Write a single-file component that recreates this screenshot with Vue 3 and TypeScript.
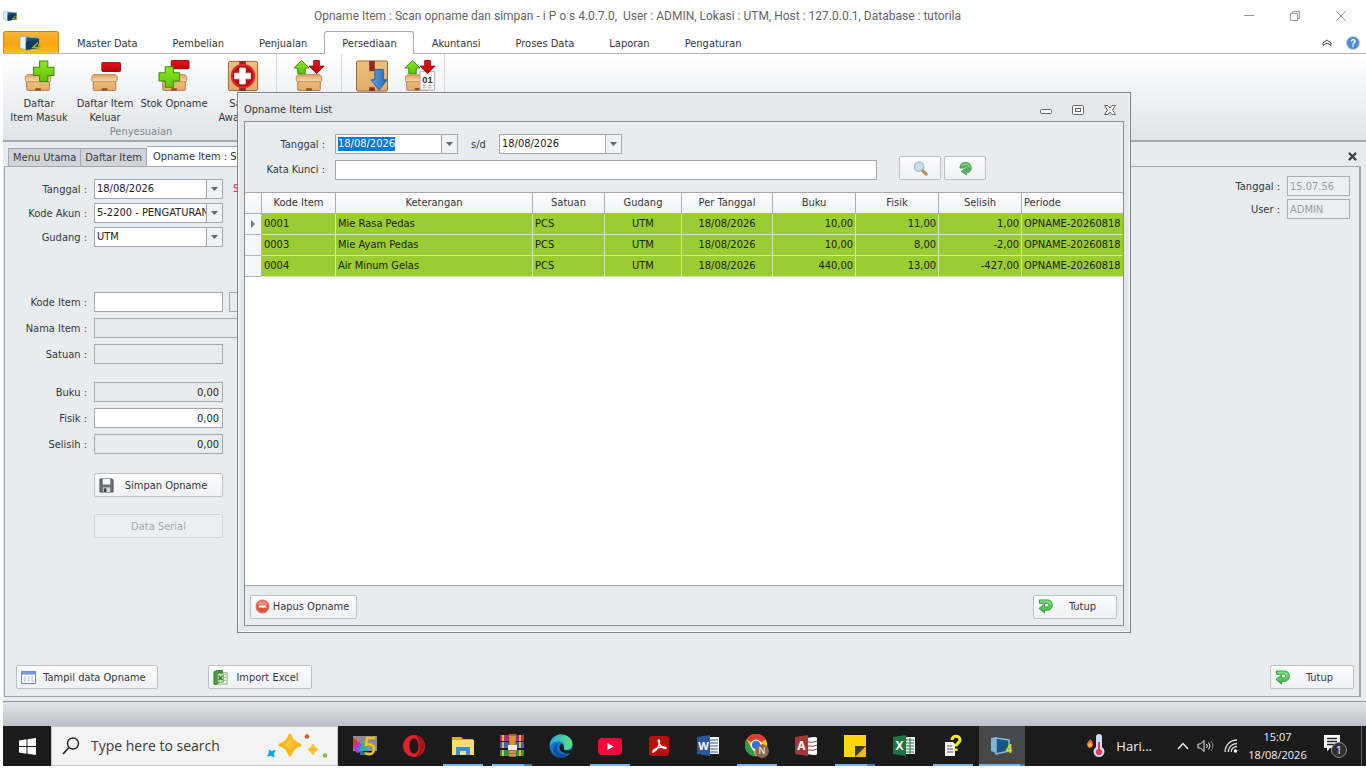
<script setup lang="ts">
import { onMounted, ref } from 'vue'

interface StockRow {
  kode: string
  nama: string
  satuan: string
  gudang: string
  tanggal: string
  buku: string
  fisik: string
  selisih: string
  periode: string
}

interface TaskApp {
  id: string
  label: string
  open?: boolean
  active?: boolean
  stacked?: boolean
}

const menu = ['Master Data', 'Pembelian', 'Penjualan', 'Persediaan', 'Akuntansi', 'Proses Data', 'Laporan', 'Pengaturan']
const activeMenu = ref('Persediaan')

const tools = [
  { icon: 'box-plus', lines: ['Daftar', 'Item Masuk'] },
  { icon: 'box-minus', lines: ['Daftar Item', 'Keluar'] },
  { icon: 'box-both', lines: ['Stok Opname'] },
  { icon: 'box-aid', lines: ['Saldo', 'Awal Item'] },
]

const rows: StockRow[] = [
  { kode: '0001', nama: 'Mie Rasa Pedas', satuan: 'PCS', gudang: 'UTM', tanggal: '18/08/2026', buku: '10,00', fisik: '11,00', selisih: '1,00', periode: 'OPNAME-20260818' },
  { kode: '0003', nama: 'Mie Ayam Pedas', satuan: 'PCS', gudang: 'UTM', tanggal: '18/08/2026', buku: '10,00', fisik: '8,00', selisih: '-2,00', periode: 'OPNAME-20260818' },
  { kode: '0004', nama: 'Air Minum Gelas', satuan: 'PCS', gudang: 'UTM', tanggal: '18/08/2026', buku: '440,00', fisik: '13,00', selisih: '-427,00', periode: 'OPNAME-20260818' },
]

const apps: TaskApp[] = [
  { id: 'five', label: 'i P o s 5' },
  { id: 'opera', label: 'Opera' },
  { id: 'folder', label: 'File Explorer', open: true },
  { id: 'rar', label: 'WinRAR', open: true, stacked: true },
  { id: 'edge', label: 'Microsoft Edge' },
  { id: 'youtube', label: 'YouTube', open: true },
  { id: 'pdf', label: 'Acrobat' },
  { id: 'word', label: 'Word' },
  { id: 'chrome', label: 'Chrome', open: true },
  { id: 'access', label: 'Access' },
  { id: 'sticky', label: 'Sticky Notes', open: true, stacked: true },
  { id: 'excel', label: 'Excel' },
  { id: 'help', label: 'Help', open: true },
  { id: 'ipos', label: 'i P o s 4', open: true, active: true, stacked: true },
]

const dateFrom = ref('18/08/2026')
const dateTo = ref('18/08/2026')
const keyword = ref('')
const dateFromBox = ref<HTMLInputElement | null>(null)

onMounted(() => {
  dateFromBox.value?.focus()
  dateFromBox.value?.select()
})
</script>

<template>
  <svg class="defs" aria-hidden="true">
    <defs>
      <linearGradient id="g-box" x1="0" y1="0" x2="0" y2="1">
        <stop offset="0" stop-color="#eebf80" /><stop offset="1" stop-color="#e0ac6c" />
      </linearGradient>
      <linearGradient id="g-flap" x1="0" y1="0" x2="0" y2="1">
        <stop offset="0" stop-color="#dca465" /><stop offset="1" stop-color="#fbdcab" />
      </linearGradient>
      <linearGradient id="g-green" x1="0" y1="0" x2="0" y2="1">
        <stop offset="0" stop-color="#8ee51c" /><stop offset="1" stop-color="#62c40e" />
      </linearGradient>
      <linearGradient id="g-red" x1="0" y1="0" x2="0" y2="1">
        <stop offset="0" stop-color="#e80f1c" /><stop offset="1" stop-color="#b8050c" />
      </linearGradient>
      <linearGradient id="g-blue" x1="0" y1="0" x2="1" y2="0">
        <stop offset="0" stop-color="#5ba3e6" /><stop offset="1" stop-color="#2a66b0" />
      </linearGradient>
      <linearGradient id="g-back" x1="0" y1="0" x2="0" y2="1">
        <stop offset="0" stop-color="#86e487" /><stop offset="1" stop-color="#3fb347" />
      </linearGradient>
      <linearGradient id="g-star" x1="0" y1="0" x2="1" y2="1">
        <stop offset="0" stop-color="#ffdf5a" /><stop offset="1" stop-color="#f0a512" />
      </linearGradient>
      <linearGradient id="g-edge" x1="0" y1="0" x2="1" y2="0">
        <stop offset="0" stop-color="#28a8e0" /><stop offset="1" stop-color="#5fe07c" />
      </linearGradient>
    </defs>

    <symbol id="box" viewBox="0 0 30 18">
      <path d="M3 6h24v10.500a1 1 0 0 1-1 1H4a1 1 0 0 1-1-1z" fill="url(#g-box)" stroke="#b07a42" />
      <path d="M3.500.5h23l2 2v4c0 1-.5 1.500-1.500 1.500H3C2 8 1.500 7.500 1.500 6.500v-4z" fill="url(#g-flap)" stroke="#c08b52" />
      <path d="M12 15h6v2.500h-6z" fill="#9a4a26" />
    </symbol>
    <symbol id="plus" viewBox="0 0 22 22">
      <path d="M7 1h8v6h6v8h-6v6H7v-6H1V7h6z" fill="url(#g-green)" stroke="#3b8f0d" stroke-linejoin="round" />
    </symbol>
    <symbol id="minus" viewBox="0 0 20 10">
      <rect x="0.5" y="0.5" width="19" height="9" rx="1" fill="url(#g-red)" stroke="#9e0a10" />
    </symbol>
    <symbol id="box-plus" viewBox="0 0 34 34">
      <use href="#box" x="1" y="15" width="30" height="18" /><use href="#plus" x="10" y="0" width="24" height="24" />
    </symbol>
    <symbol id="box-minus" viewBox="0 0 34 34">
      <use href="#box" x="1" y="15" width="31" height="18" /><use href="#minus" x="13" y="2" width="21" height="11" />
    </symbol>
    <symbol id="box-both" viewBox="0 0 34 34">
      <use href="#box" x="2" y="15" width="30" height="18" /><use href="#minus" x="13" y="0" width="21" height="10" /><use href="#plus" x="0" y="6" width="24" height="24" />
    </symbol>
    <symbol id="box-aid" viewBox="0 0 34 34">
      <rect x="1.500" y="1.500" width="31" height="31" rx="2" fill="url(#g-box)" stroke="#9a5f2a" />
      <path d="M13 1h7v6h-7zM13 29h7v4h-7z" fill="#8e2c1c" />
      <circle cx="17" cy="17" r="12" fill="#b80d15" stroke="#dc2a2a" stroke-width="2" />
      <path d="M13.500 8.500h6v5.500H25v6h-5.500v5.500h-6V20H8v-6h5.500z" fill="#fff" stroke="#ddd" />
    </symbol>
    <symbol id="box-swap" viewBox="0 0 34 34">
      <use href="#box" x="1" y="15" width="32" height="18" />
      <path d="M9 .5l8 8h-4v6H5v-6H1z" fill="url(#g-green)" stroke="#3b8f0d" />
      <path d="M22 .5h6v6h5l-8 8-8-8h5z" fill="url(#g-red)" stroke="#9e0a10" />
    </symbol>
    <symbol id="box-down" viewBox="0 0 34 34">
      <rect x=".5" y="1" width="33" height="32" rx="2" fill="url(#g-box)" stroke="#9a5f2a" />
      <path d="M14 1h6v11h-6zM14 29h6v4h-6z" fill="#8e2c1c" />
      <path d="M20 10h9v11h4l-8.500 11L16 21h4z" fill="url(#g-blue)" stroke="#2a5d9c" />
    </symbol>
    <symbol id="box-date" viewBox="0 0 34 34">
      <use href="#box" x="0" y="15" width="29" height="18" />
      <path d="M17 12h15.500v20H17z" fill="#fafafa" stroke="#aaa" />
      <path d="M9 .5l8 8h-4v6H5v-6H1z" fill="url(#g-green)" stroke="#3b8f0d" />
      <path d="M22 .5h6v6h5l-8 8-8-8h5z" fill="url(#g-red)" stroke="#9e0a10" />
      <path d="M20 26h3v2h-3zM26 26h3v2h-3zM20 29h3v1h-3zM26 29h3v1h-3z" fill="#aaa" />
    </symbol>
    <symbol id="pc" viewBox="0 0 24 16">
      <path d="M1 2l6-1v14l-6-2z" fill="#e9f2f7" stroke="#9bb9c9" />
      <path d="M7 2l13 1v10L7 15z" fill="#1c4f79" stroke="#7fa9c4" />
      <path d="M7 7l13-3v9L7 15z" fill="#123a5c" />
      <path d="M19 7.500l-5 5h8M20 9v5" fill="none" stroke="#a6b81c" stroke-width="1.500" />
    </symbol>
    <symbol id="back" viewBox="0 0 16 16">
      <path d="M1.500 1H10c7 0 7 11 0 11H7v3L1 10l6-4.500V8.500h2.500c2.500 0 2.500-4 0-4H1.500z" fill="url(#g-back)" stroke="#2a9a36" stroke-linejoin="round" />
    </symbol>
    <symbol id="redo" viewBox="0 0 16 16">
      <path d="M2.500 5C4 1.500 6 1.500 8 1.500c8 0 8 11 1 11V15l-5.500-4L9 7.500v2c2-.5 2-3-.5-3-1 0-1.500 0-2 1H2z" fill="#5fb168" stroke="#43974f" stroke-linejoin="round" />
      <path d="M4.500 4.500c3-2 7-1.500 7.500 2" fill="none" stroke="#a8dfaa" />
    </symbol>
  </svg>

  <div class="screen">
    <header class="titlebar">
      <svg class="app-mark" viewBox="0 0 24 16" aria-hidden="true"><use href="#pc" /></svg>
      <h1>Opname Item : Scan opname dan simpan - i P o s 4.0.7.0,&nbsp; User : ADMIN, Lokasi : UTM, Host : 127.0.0.1, Database : tutorila</h1>
      <div class="win-controls">
        <button aria-label="Minimize"><svg viewBox="0 0 12 12"><path d="M1 5.500h10" /></svg></button>
        <button aria-label="Restore"><svg viewBox="0 0 12 12"><path d="M1.500 3.500h7v7h-7zM3.500 3.500v-2h7v7h-2" /></svg></button>
        <button aria-label="Close"><svg viewBox="0 0 12 12"><path d="M1 1l10 10M11 1L1 11" /></svg></button>
      </div>
    </header>

    <nav class="menu">
      <button class="app-button" aria-label="Menu aplikasi"><svg viewBox="0 0 24 16"><use href="#pc" /></svg></button>
      <button
        v-for="m in menu"
        :key="m"
        class="menu-tab"
        :class="{ active: m === activeMenu }"
        @click="activeMenu = m"
      >{{ m }}</button>
      <div class="menu-end">
        <button aria-label="Ciutkan"><svg class="chev" viewBox="0 0 10 8"><path d="M1 4l4-3 4 3v2.500L5 4 1 6.500z" fill="#fff" stroke="#555" /></svg></button>
        <button aria-label="Bantuan">
          <svg class="help" viewBox="0 0 14 14"><circle cx="7" cy="7" r="6.500" fill="#4c8ad0" stroke="#b9d0ea" /><text x="7" y="11" text-anchor="middle" font-size="10" font-weight="700" font-family="Liberation Sans, sans-serif" fill="#fff">?</text></svg>
        </button>
      </div>
    </nav>

    <section class="ribbon">
      <div class="group adjust">
        <div class="tools">
          <button v-for="t in tools" :key="t.icon" class="tool">
            <svg viewBox="0 0 34 34"><use :href="'#' + t.icon" /></svg>
            <span v-for="l in t.lines" :key="l">{{ l }}</span>
          </button>
        </div>
        <div class="group-name">Penyesuaian</div>
      </div>
      <div class="group single"><button class="tool" aria-label="Transfer item"><svg viewBox="0 0 34 34"><use href="#box-swap" /></svg></button></div>
      <div class="group pair">
        <button class="tool" aria-label="Terima item"><svg viewBox="0 0 34 34"><use href="#box-down" /></svg></button>
        <button class="tool" aria-label="Periode item">
          <svg viewBox="0 0 34 34">
            <use href="#box-date" />
            <text x="25" y="24" text-anchor="middle" font-size="10" font-weight="700" font-family="Liberation Sans, sans-serif" fill="#333">01</text>
          </svg>
        </button>
      </div>
    </section>

    <main class="workspace">
      <div class="doc-tabs">
        <button class="doc-tab">Menu Utama</button>
        <button class="doc-tab">Daftar Item</button>
        <button class="doc-tab active">Opname Item : Scan opname</button>
        <button class="doc-close" aria-label="Tutup tab"><svg viewBox="0 0 10 10"><path d="M1 1l8 8M9 1L1 9" stroke="#444" stroke-width="2.500" /></svg></button>
      </div>

      <div class="panel">
        <form class="form" @submit.prevent>
          <div class="block tight">
            <div class="row">
              <label for="f-tgl">Tanggal :</label>
              <div class="combo"><input id="f-tgl" type="text" value="18/08/2026" /><button type="button" class="drop" aria-label="Pilih tanggal"><svg viewBox="0 0 7 4"><path d="M0 0h7L3.500 4z" /></svg></button></div>
              <span class="note">Scan</span>
            </div>
            <div class="row">
              <label for="f-akun">Kode Akun :</label>
              <div class="combo"><select id="f-akun"><option>5-2200 - PENGATURAN STOK</option></select><span class="drop"><svg viewBox="0 0 7 4"><path d="M0 0h7L3.500 4z" /></svg></span></div>
            </div>
            <div class="row">
              <label for="f-gudang">Gudang :</label>
              <div class="combo"><select id="f-gudang"><option>UTM</option></select><span class="drop"><svg viewBox="0 0 7 4"><path d="M0 0h7L3.500 4z" /></svg></span></div>
            </div>
          </div>
          <div class="block item">
            <div class="row"><label for="f-kode">Kode Item :</label><input id="f-kode" class="box" type="text" /><button type="button" class="find" aria-label="Cari item"></button></div>
            <div class="row"><label for="f-nama">Nama Item :</label><input id="f-nama" class="box wide" type="text" readonly /></div>
            <div class="row"><label for="f-satuan">Satuan :</label><input id="f-satuan" class="box" type="text" readonly /></div>
          </div>
          <div class="block qty">
            <div class="row"><label for="f-buku">Buku :</label><input id="f-buku" class="box num" type="text" value="0,00" readonly /></div>
            <div class="row"><label for="f-fisik">Fisik :</label><input id="f-fisik" class="box num" type="text" value="0,00" /></div>
            <div class="row"><label for="f-selisih">Selisih :</label><input id="f-selisih" class="box num" type="text" value="0,00" readonly /></div>
          </div>
          <div class="actions">
            <button type="submit" class="btn">
              <svg class="ic" viewBox="0 0 16 16"><path d="M1 1h13l1 1v13H1z" fill="#6b7075" stroke="#4c5054" /><path d="M4 1h8v6H4z" fill="#f4f6f8" /><path d="M4 10h8v5H4z" fill="#d5d9dd" /><path d="M5 11h3v4H5z" fill="#3f4347" /></svg>
              <span>Simpan Opname</span>
            </button>
            <button type="button" class="btn" disabled><span>Data Serial</span></button>
          </div>
        </form>

        <div class="info">
          <div class="row"><label for="i-jam">Tanggal :</label><input id="i-jam" type="text" value="15.07.56" disabled /></div>
          <div class="row"><label for="i-user">User :</label><input id="i-user" type="text" value="ADMIN" disabled /></div>
        </div>

        <div class="panel-foot">
          <button class="btn show">
            <svg class="ic" viewBox="0 0 16 16"><path d="M.5 1.500h15v13H.5z" fill="#fff" stroke="#5b7cc0" /><path d="M1 2h14v3H1z" fill="#7b9de0" /><path d="M3 7.500h2M7 7.500h2M11 7.500h2M3 9.500h2M7 9.500h2M11 9.500h2M3 11.500h2M7 11.500h2M11 11.500h2" stroke="#8fa5c8" /></svg>
            <span>Tampil data Opname</span>
          </button>
          <button class="btn import">
            <svg class="ic" viewBox="0 0 16 16"><path d="M6 3h9v12H6z" fill="#f3faf1" stroke="#77b068" /><path d="M12 5h2M12 8h2M12 11h2" stroke="#77b068" /><path d="M1 2l3-1.500h6V3H5v10l-1 3-3-1z" fill="#4c9c3d" stroke="#2f7c27" /><path d="M5 4h6v9H5z" fill="#dff0d8" stroke="#5ba34b" /><path d="M6 6l4 5M10 6l-4 5" stroke="#2c6d25" stroke-width="1.500" /></svg>
            <span>Import Excel</span>
          </button>
          <button class="btn close"><svg class="ic" viewBox="0 0 16 16"><use href="#back" /></svg><span>Tutup</span></button>
        </div>
      </div>
    </main>

    <div class="statusbar"></div>

    <footer class="taskbar">
      <button class="start" aria-label="Start"><svg viewBox="0 0 17 17"><path d="M0 2.500L7.500 1.300V8H0zM8.500 1.200L17 0v8H8.500zM0 9h7.500v6.700L0 14.500zM8.500 9H17v8l-8.500-1.200z" fill="#fff" /></svg></button>
      <label class="search">
        <svg class="lens" viewBox="0 0 18 18"><circle cx="11" cy="6.500" r="5.500" fill="none" stroke="#222" stroke-width="1.400" /><path d="M7 10.500L1 17" stroke="#222" stroke-width="1.600" /></svg>
        <input type="text" placeholder="Type here to search" aria-label="Type here to search" />
        <svg class="spark" viewBox="0 0 62 26">
          <path d="M24 2q2 7.500 10 10-8 2.500-10 10-2-7.500-10-10 8-2.500 10-10z" fill="url(#g-star)" stroke="#f5b91e" stroke-width="3" stroke-linejoin="round" />
          <path d="M47 11q1 4 5 5.500-4 1.500-5 5.500-1-4-5-5.500 4-1.500 5-5.500z" fill="#fbc02d" stroke="#fbc02d" stroke-linejoin="round" />
          <path d="M3.500 17l2 1.500L9 17.500 7.500 20.500 8 24 5 22.500 1.500 23l1.500-2.500z" fill="#16a3e0" stroke="#16a3e0" stroke-linejoin="round" />
          <circle cx="41" cy="3.500" r="2.200" fill="#e85426" /><circle cx="59" cy="22.500" r="2.200" fill="#83bd49" />
        </svg>
      </label>

      <div class="apps">
        <button v-for="a in apps" :key="a.id" class="app" :class="{ open: a.open, active: a.active, stacked: a.stacked }" :aria-label="a.label">
          <svg v-if="a.id === 'five'" viewBox="0 0 24 24"><path d="M0 2h24v15H0z" fill="#8b8d90" /><path d="M0 3l10 10H0z" fill="#e2341d" /><path d="M0 14l6-7 6 10-8 2z" fill="#a43be0" /><path d="M10 8l5 9H5z" fill="#19b8b0" /><path d="M7 18h10v3H7z" fill="#3d6c93" /><path d="M22 4h-8l-1 7c4-2 9 0 8 5s-6 5-9 3" fill="none" stroke="#f2c313" stroke-width="2.400" /></svg>
          <svg v-else-if="a.id === 'opera'" viewBox="0 0 24 24"><path fill-rule="evenodd" d="M12 1a11 11 0 1 0 .01 0zM12 4.500c3 0 4.500 3.500 4.500 7.500s-1.500 7.500-4.500 7.500S7.500 16 7.500 12 9 4.500 12 4.500z" fill="#e0202c" /><path d="M14 1.500C25 4 25 20 14 22.500 19 18 19 6 14 1.500z" fill="#a70f1b" /></svg>
          <svg v-else-if="a.id === 'folder'" viewBox="0 0 24 24"><path d="M1 3h9l2 2h10v16H1z" fill="#e5a924" /><path d="M1 6h22v15H1z" fill="#fddc78" /><path d="M5 21v-8h14v8h-4v-4H9v4z" fill="#3b8fd0" /></svg>
          <svg v-else-if="a.id === 'rar'" viewBox="0 0 24 24"><path d="M0 1h24v6H0z" fill="#b02a78" /><path d="M0 8h24v6H0z" fill="#3f5fb8" /><path d="M0 16h24v6H0z" fill="#3c8f3a" /><path d="M2 1h2v6H2zM2 8h2v6H2zM2 16h2v6H2zM19 1h2v6h-2zM19 8h2v6h-2zM19 16h2v6h-2z" fill="#e8b93a" /><path d="M9 0h7v23H9z" fill="#b5652a" /><path d="M9 3h7M9 6h7M9 18h7M9 21h7" stroke="#e9c38a" /><path d="M8 11h9v5H8z" fill="#f3efe0" /><path d="M10 3h5v8h-5z" fill="#d7942d" /></svg>
          <svg v-else-if="a.id === 'edge'" viewBox="0 0 24 24"><circle cx="12" cy="12" r="11.500" fill="#1377c9" /><path d="M1 10C2 3 8 .5 12 .5c7 0 12 5 11.500 10C23 15 17 17 14.500 15c1-1.500 1.500-7-4-7.500C6 7 2 9 1 13z" fill="url(#g-edge)" /><path d="M9 10c-4 5 1 12 10 10-4 5-12 4-14-1S6 10 9 10z" fill="#0c4f9e" /><path d="M14.500 15c2 2 6 2 8.500 0l-1.500 4c-7 2-11-2-11-6 0-2 1-3 2.500-3 2 1 2 3.500 1.500 5z" fill="#181818" /></svg>
          <svg v-else-if="a.id === 'youtube'" viewBox="0 0 24 24"><rect y="4" width="24" height="17" rx="4" fill="#f8043a" /><path d="M9.500 9v7l6-3.500z" fill="#fff" /></svg>
          <svg v-else-if="a.id === 'pdf'" viewBox="0 0 24 24"><rect x="2" y="2" width="20" height="20" rx="3" fill="#b70f0c" /><path d="M6 18c3-1 7-6 6.500-11-.5-2-1.800-1-1 1 1 3 4 6 7 6.500 1.500-.5 0-2-3-1.500-4 .5-8 2-9.500 4z" fill="none" stroke="#fff" stroke-width="1.500" /></svg>
          <svg v-else-if="a.id === 'word'" viewBox="0 0 24 24"><path d="M12 3h11v17H12z" fill="#fff" /><path d="M14 6h8M14 9h8M14 12h8M14 15h8M14 18h8" stroke="#2b579a" /><path d="M1 3l13-2v21L1 20z" fill="#2b579a" /><text x="7.500" y="16" text-anchor="middle" font-size="11" font-weight="700" font-family="Open Sans, sans-serif" fill="#fff">W</text></svg>
          <svg v-else-if="a.id === 'chrome'" viewBox="0 0 26 26"><circle cx="12" cy="12" r="12" fill="#f9c21b" /><path d="M12 12L1.600 6A12 12 0 0 1 22.400 6z" fill="#df3b2f" /><path d="M12 0a12 12 0 0 1 10.400 6H12z" fill="#df3b2f" /><path d="M1.600 6L7 15l5 9A12 12 0 0 1 1.600 6z" fill="#2c9b4b" /><circle cx="12" cy="12" r="6" fill="#fff" /><circle cx="12" cy="12" r="4.600" fill="#2f72e0" /><circle cx="18.500" cy="18.500" r="7.500" fill="#84665c" /><text x="18.500" y="22" text-anchor="middle" font-size="10" font-family="Open Sans, sans-serif" fill="#fff">N</text></svg>
          <svg v-else-if="a.id === 'access'" viewBox="0 0 24 24"><path d="M13 4q10-2 10 0v16q0 2-10 0z" fill="#fff" /><path d="M13 8q7 1 10-1M13 12q7 1 10-1M13 16q7 1 10-1" stroke="#a4373a" fill="none" /><path d="M1 3l13-2v21L1 20z" fill="#a4373a" /><text x="7.500" y="16" text-anchor="middle" font-size="12" font-weight="700" font-family="Open Sans, sans-serif" fill="#fff">A</text></svg>
          <svg v-else-if="a.id === 'sticky'" viewBox="0 0 24 24"><path d="M1 1h22v22H1z" fill="#fdd60d" /><path d="M23 12v11H12z" fill="#f2b800" /><path d="M12 12h11L12 23z" fill="#3a3a36" /></svg>
          <svg v-else-if="a.id === 'excel'" viewBox="0 0 24 24"><path d="M12 3h11v17H12z" fill="#fff" /><path d="M14 6h8M14 9h8M14 12h8M14 15h8M14 18h8M18 4v16" stroke="#217346" /><path d="M1 3l13-2v21L1 20z" fill="#1f7244" /><text x="7.500" y="16" text-anchor="middle" font-size="12" font-weight="700" font-family="Open Sans, sans-serif" fill="#fff">X</text></svg>
          <svg v-else-if="a.id === 'help'" viewBox="0 0 24 24"><path d="M4 8h8l2 2v12H4z" fill="#f5f5f5" /><path d="M6 12h5M6 15h6M6 18h6" stroke="#555" /><path d="M11 6c0-5 8-5 8 0 0 3-4 3-4 6.500" fill="none" stroke="#f7ee10" stroke-width="3" /><path d="M13.500 14.500h3v2.500h-3z" fill="#f7ee10" /></svg>
          <svg v-else viewBox="0 0 24 24"><path d="M1 4l5-1v16l-5-2z" fill="#7fb4d4" /><path d="M6 4l13 2v11L6 20z" fill="#18557f" stroke="#84b7d6" stroke-width="1.500" /><text x="19" y="19" text-anchor="middle" font-size="12" font-weight="700" font-family="Open Sans, sans-serif" fill="#d4dc1c">4</text></svg>
        </button>
      </div>

      <div class="tray">
        <button class="weather">
          <svg viewBox="0 0 20 24"><path d="M4 5c4 3 4 8 0 9-4-1-4-5-1-7z" fill="#f36b21" /><circle cx="4" cy="11" r="2" fill="#fcb13b" /><path d="M10 3a3 3 0 0 1 6 0v10a5.500 5.500 0 1 1-6 0z" fill="#cfdcf5" /><path d="M12 8h2v7a3.200 3.200 0 1 1-2 0z" fill="#e5395c" /></svg>
          <span>Hari...</span>
        </button>
        <button aria-label="Ikon tersembunyi" class="up"><svg viewBox="0 0 12 8"><path d="M1 7l5-5.500L11 7" fill="none" stroke="#eee" stroke-width="1.500" /></svg></button>
        <button aria-label="Volume" class="vol"><svg viewBox="0 0 18 14"><path d="M1 5h2.500L7 1.500v11L3.500 9H1z" fill="none" stroke="#eee" /><path d="M9.500 5q1.500 2 0 4M11.500 3.500q3 3.500 0 7" fill="none" stroke="#eee" /><path d="M14 2q4 5 0 10" fill="none" stroke="#888" /></svg></button>
        <button aria-label="Jaringan" class="wifi"><svg viewBox="0 0 14 14"><path d="M1 13A12 12 0 0 1 13 1M4 13a9 9 0 0 1 9-8.500M7 13a6 6 0 0 1 6-5.500" fill="none" stroke="#ddd" stroke-width="1.300" /><circle cx="11.500" cy="12" r="1.800" fill="#fff" /></svg></button>
        <button class="clock"><span>15:07</span><span>18/08/2026</span></button>
        <button class="notif" aria-label="1 notifikasi"><svg viewBox="0 0 26 26"><path d="M1 2h16v13H7l-3 3.500V15H1z" fill="#fff" /><path d="M4 5.500h10M4 8.500h10M4 11.500h7" stroke="#222" stroke-width="1.300" /><circle cx="16" cy="17" r="7.500" fill="#303030" stroke="#8a8a8a" /><text x="16" y="21" text-anchor="middle" font-size="11" font-family="Open Sans, sans-serif" fill="#fff">1</text></svg></button>
        <button class="desk" aria-label="Tampilkan desktop"></button>
      </div>
    </footer>

    <section class="dialog" role="dialog" aria-label="Opname Item List">
      <header class="dlg-title">
        <h2>Opname Item List</h2>
        <button aria-label="Perkecil"><svg viewBox="0 0 12 12"><rect x=".5" y="5.500" width="11" height="4" rx="1" fill="#fff" stroke="#666" /></svg></button>
        <button aria-label="Perbesar"><svg viewBox="0 0 12 12"><rect x=".5" y="1.500" width="11" height="9" rx="1" fill="#fff" stroke="#666" /><rect x="3.500" y="4.500" width="5" height="3" fill="#fff" stroke="#666" /></svg></button>
        <button aria-label="Tutup dialog"><svg viewBox="0 0 12 12"><path d="M.5 1.500h3.500l2 2.500 2-2.500h3.500L8.500 6l3 4.500H8L6 8l-2 2.500H.5L3.500 6z" fill="#fff" stroke="#666" /></svg></button>
      </header>

      <div class="dlg-body">
        <div class="filter">
          <div class="frow">
            <label for="d-from">Tanggal :</label>
            <div class="combo"><input id="d-from" ref="dateFromBox" v-model="dateFrom" type="text" /><button class="drop" aria-label="Pilih tanggal awal"><svg viewBox="0 0 7 4"><path d="M0 0h7L3.500 4z" /></svg></button></div>
            <label for="d-to" class="until">s/d</label>
            <div class="combo"><input id="d-to" v-model="dateTo" type="text" /><button class="drop" aria-label="Pilih tanggal akhir"><svg viewBox="0 0 7 4"><path d="M0 0h7L3.500 4z" /></svg></button></div>
          </div>
          <div class="frow second">
            <label for="d-key">Kata Kunci :</label>
            <input id="d-key" v-model="keyword" class="box key" type="text" />
            <button class="btn icon-only first" aria-label="Cari"><svg class="ic" viewBox="0 0 16 16"><circle cx="6.500" cy="6" r="5" fill="#c5def2" stroke="#a9bed6" stroke-width="1.500" /><path d="M10.500 10.500l3.500 3.500" stroke="#c58a5d" stroke-width="3.500" stroke-linecap="round" /></svg></button>
            <button class="btn icon-only" aria-label="Muat ulang"><svg class="ic" viewBox="0 0 16 16"><use href="#redo" /></svg></button>
          </div>
        </div>

        <div class="grid">
          <table>
            <colgroup>
              <col class="c-mark" /><col class="c-kode" /><col class="c-nama" /><col class="c-sat" /><col class="c-gud" /><col class="c-tgl" /><col class="c-num" /><col class="c-num" /><col class="c-num" /><col />
            </colgroup>
            <thead>
              <tr><th></th><th>Kode Item</th><th>Keterangan</th><th>Satuan</th><th>Gudang</th><th>Per Tanggal</th><th>Buku</th><th>Fisik</th><th>Selisih</th><th class="left">Periode</th></tr>
            </thead>
            <tbody>
              <tr v-for="(r, i) in rows" :key="r.kode">
                <td class="mark"><svg v-if="i === 0" viewBox="0 0 4 8"><path d="M0 0l4 4-4 4z" fill="#777" /></svg></td>
                <td>{{ r.kode }}</td>
                <td>{{ r.nama }}</td>
                <td>{{ r.satuan }}</td>
                <td class="mid">{{ r.gudang }}</td>
                <td class="mid">{{ r.tanggal }}</td>
                <td class="right">{{ r.buku }}</td>
                <td class="right">{{ r.fisik }}</td>
                <td class="right">{{ r.selisih }}</td>
                <td>{{ r.periode }}</td>
              </tr>
            </tbody>
          </table>
        </div>

        <div class="dlg-foot">
          <button class="btn delete"><svg class="ic" viewBox="0 0 16 16"><circle cx="8" cy="8" r="7" fill="#e4533d" stroke="#d98273" /><path d="M2.500 6A6 6 0 0 1 13.500 6z" fill="#f08f7c" /><path d="M4 8h8" stroke="#fff" stroke-width="2.200" /></svg><span>Hapus Opname</span></button>
          <button class="btn close"><svg class="ic" viewBox="0 0 16 16"><use href="#back" /></svg><span>Tutup</span></button>
        </div>
      </div>
    </section>
  </div>
</template>

<style>
body {
  background: #fff;
}
</style>

<style scoped>
* {
  box-sizing: border-box;
}
.defs {
  position: absolute;
  width: 0;
  height: 0;
}
.screen {
  position: relative;
  display: flex;
  flex-direction: column;
  height: 100vh;
  padding: 0 0 2px 3px;
  overflow: hidden;
  background: #fff;
  color: #33373b;
  font: 11px/14px "DejaVu Sans Condensed", "Noto Sans", sans-serif;
}
button,
input,
select {
  margin: 0;
  padding: 0;
  border: 0;
  border-radius: 0;
  outline: 0;
  background: none;
  color: inherit;
  font: inherit;
}
svg {
  display: block;
  flex: none;
}

/* window title */
.titlebar {
  display: flex;
  align-items: center;
  flex: none;
  height: 31px;
  padding-right: 2px;
}
.app-mark {
  width: 16px;
  height: 12px;
}
.titlebar h1 {
  flex: 1;
  margin: 0 0 0 30px;
  color: #666;
  font: 400 12px/16px Roboto, sans-serif;
  text-align: center;
  white-space: nowrap;
}
.win-controls {
  display: flex;
}
.win-controls button {
  display: grid;
  place-items: center;
  width: 46px;
  height: 28px;
}
.win-controls svg {
  width: 12px;
  height: 12px;
  fill: none;
  stroke: #999;
}

/* menu tabs */
.menu {
  display: flex;
  flex: none;
  align-items: flex-end;
  height: 23px;
  border-bottom: 1px solid #b4b9be;
}
.app-button {
  display: grid;
  place-items: center;
  width: 56px;
  height: 22px;
  border: 1px solid #c98a1a;
  border-bottom: 0;
  border-radius: 3px 3px 0 0;
  background: linear-gradient(#f9b53a, #fba40c 60%, #fdc02c);
}
.app-button svg {
  width: 24px;
  height: 16px;
}
.menu-tab {
  height: 22px;
  padding: 2px 16px 0 17px;
  border: 1px solid transparent;
  border-bottom: 0;
}
.menu-tab.active {
  height: 23px;
  margin-bottom: -1px;
  padding-top: 1px;
  border-color: #a9aeb4;
  border-radius: 3px 3px 0 0;
  background: #fff;
}
.menu-end {
  display: flex;
  align-items: center;
  gap: 14px;
  height: 22px;
  margin-left: auto;
  padding: 2px 6px 0 0;
}
.chev {
  width: 10px;
  height: 8px;
}
.help {
  width: 14px;
  height: 14px;
}

/* ribbon */
.ribbon {
  display: flex;
  flex: none;
  height: 88px;
  padding-left: 3px;
  border-bottom: 2px solid #a3a8ae;
  background: linear-gradient(#fff, #eff1f4 50%, #e0e3e8);
}
.group {
  display: flex;
  padding: 6px 0 1px;
  border-right: 1px solid #d3d7dc;
}
.adjust {
  flex-direction: column;
  justify-content: space-between;
  width: 271px;
}
.tools {
  display: flex;
}
.tool {
  display: flex;
  flex-direction: column;
  align-items: center;
  width: 66px;
  white-space: nowrap;
}
.tool svg {
  width: 32px;
  height: 32px;
  margin-bottom: 5px;
}
.tools .tool:nth-child(3) {
  width: 72px;
}
.group-name {
  color: #83888e;
  text-align: center;
}
.single .tool {
  width: 64px;
}
.pair {
  padding-left: 6px;
}
.pair .tool {
  width: 48px;
}

/* document area */
.workspace {
  display: flex;
  flex: 1;
  flex-direction: column;
  min-height: 0;
  padding: 4px 5px 4px 1px;
  background: #e8ecef;
}
.doc-tabs {
  display: flex;
  flex: none;
  align-items: flex-end;
  height: 20px;
  padding-left: 4px;
}
.doc-tab {
  height: 18px;
  padding: 0 4px;
  border: 1px solid #a4a9b0;
  border-bottom: 0;
  background: #d0d4da;
  white-space: nowrap;
}
.doc-tab + .doc-tab {
  border-left: 0;
}
.doc-tab.active {
  height: 20px;
  padding-left: 6px;
  background: #fff;
}
.doc-close {
  align-self: center;
  margin: 0 4px 0 auto;
}
.doc-close svg {
  width: 9px;
  height: 9px;
}
.panel {
  display: grid;
  grid-template-columns: 1fr auto;
  grid-template-rows: 1fr auto;
  flex: 1;
  min-height: 0;
  border: 1px solid #a2a7ad;
  border-right-width: 2px;
}
.form {
  padding-top: 12px;
}
.block {
  display: flex;
  flex-direction: column;
  gap: 6px;
}
.block.tight {
  gap: 4px;
}
.block.item {
  margin-top: 45px;
}
.block.qty {
  margin-top: 18px;
}
.row {
  display: flex;
  align-items: center;
  height: 20px;
}
.row label {
  width: 82px;
  margin-right: 7px;
  padding-top: 2px;
  text-align: right;
}
.box {
  width: 129px;
  height: 20px;
  padding: 0 3px;
  border: 1px solid #a3a8ae;
  background: #fff;
  color: #222;
}
.box[readonly] {
  background: #e8ecef;
}
.box.wide {
  width: 220px;
}
.box.num {
  text-align: right;
}
.note {
  margin-left: 10px;
  color: #e0203a;
}
.find {
  width: 20px;
  height: 20px;
  margin-left: 6px;
  border: 1px solid #a3a8ae;
}
.combo {
  display: flex;
  width: 129px;
  height: 20px;
  border: 1px solid #a3a8ae;
  background: #fff;
}
.combo input,
.combo select {
  flex: 1;
  min-width: 0;
  padding: 0 0 0 2px;
  appearance: none;
  color: #222;
}
.combo select {
  overflow: hidden;
}
.combo input::selection {
  background: #0078d7;
  color: #fff;
}
.drop {
  display: grid;
  flex: none;
  place-items: center;
  width: 16px;
  border-left: 1px solid #a3a8ae;
  background: #f0f2f5;
}
.drop svg {
  width: 7px;
  height: 4px;
  fill: #666;
}
.actions {
  display: flex;
  flex-direction: column;
  gap: 17px;
  width: 129px;
  margin: 19px 0 0 89px;
}
.btn {
  display: flex;
  align-items: center;
  height: 24px;
  padding: 0 4px;
  border: 1px solid #bcc1c8;
  border-radius: 2px;
  background: linear-gradient(#fdfdfe, #eff1f5);
  white-space: nowrap;
}
.btn .ic {
  width: 15px;
  height: 15px;
}
.btn span {
  flex: 1;
  padding-top: 1px;
  text-align: center;
}
.btn:disabled {
  border-color: #d3d7dc;
  background: #eceff2;
  color: #a3a7ab;
}
.info {
  display: flex;
  flex-direction: column;
  gap: 3px;
  padding: 9px 9px 0 0;
}
.info input {
  width: 63px;
  height: 20px;
  padding: 0 2px;
  border: 1px solid #a9aeb4;
  background: #eceff1;
  color: #999da1;
}
.panel-foot {
  display: flex;
  grid-column: 1 / -1;
  padding: 0 5px 7px 11px;
}
.btn.show {
  width: 142px;
}
.btn.import {
  width: 104px;
  margin-left: 50px;
}
.btn.close {
  width: 84px;
  margin-left: auto;
}
.statusbar {
  flex: none;
  height: 25px;
  border-top: 1px solid #8e9399;
  background: linear-gradient(#e2e5ea, #bdc0c6);
}

/* dialog */
.dialog {
  position: absolute;
  top: 92px;
  right: 235px;
  bottom: 135px;
  left: 237px;
  display: flex;
  flex-direction: column;
  padding: 0 6px 6px;
  border: 1px solid #7c8187;
  background: #e4e7eb;
  box-shadow: inset 0 0 0 1px #f6f7f9;
}
.dlg-title {
  display: flex;
  flex: none;
  align-items: center;
  gap: 20px;
  height: 28px;
  padding: 5px 8px 0 0;
}
.dlg-title h2 {
  flex: 1;
  margin: 0;
  font: inherit;
}
.dlg-title svg {
  width: 12px;
  height: 12px;
}
.dlg-body {
  display: flex;
  flex: 1;
  flex-direction: column;
  min-height: 0;
  border: 1px solid #878c92;
  background: #e8ecef;
}
.filter {
  flex: none;
  height: 70px;
  padding-top: 12px;
}
.frow {
  display: flex;
  align-items: center;
  height: 20px;
}
.frow.second {
  align-items: flex-end;
  height: 26px;
}
.frow label {
  width: 80px;
  margin-right: 10px;
  padding-top: 2px;
  text-align: right;
}
.second label {
  padding-bottom: 3px;
}
.frow .until {
  width: 41px;
  margin: 0;
  text-align: center;
}
.frow .combo {
  width: 123px;
}
.key {
  width: 542px;
}
.icon-only {
  justify-content: center;
  width: 42px;
}
.icon-only.first {
  margin: 0 3px 0 22px;
}
.grid {
  flex: 1;
  min-height: 0;
  border-top: 1px solid #a3a8ae;
  border-bottom: 1px solid #a3a8ae;
  background: #fff;
}
table {
  width: 100%;
  border-collapse: separate;
  border-spacing: 0;
  table-layout: fixed;
}
.c-mark {
  width: 17px;
}
.c-kode {
  width: 74px;
}
.c-nama {
  width: 197px;
}
.c-sat {
  width: 72px;
}
.c-gud {
  width: 77px;
}
.c-tgl {
  width: 91px;
}
.c-num {
  width: 83px;
}
th,
td {
  height: 21px;
  padding: 0 2px;
  overflow: hidden;
  font-weight: 400;
  white-space: nowrap;
}
th {
  border-right: 1px solid #a9aeb4;
  border-bottom: 1px solid #a9aeb4;
  background: linear-gradient(#fcfcfd, #f1f3f6);
  text-align: center;
}
td {
  border-right: 1px solid #d6e9ac;
  border-bottom: 1px solid #d6e9ac;
  background: #9acd32;
  color: #1a2208;
  text-align: left;
}
td.mark {
  border-color: #b3b8be;
  background: #f6f7f9;
}
.mark svg {
  width: 4px;
  height: 8px;
  margin: 0 auto;
}
th:last-child,
td:last-child {
  border-right: 0;
}
th.left {
  text-align: left;
}
td.mid {
  text-align: center;
}
td.right {
  text-align: right;
}
.dlg-foot {
  display: flex;
  flex: none;
  align-items: center;
  height: 39px;
  padding: 2px 6px 0 5px;
}
.btn.delete {
  width: 107px;
}

/* taskbar */
.taskbar {
  display: flex;
  flex: none;
  height: 40px;
  background: #1b1b1c;
  color: #f2f2f2;
  font-family: "Open Sans", sans-serif;
}
.start {
  display: grid;
  place-items: center;
  width: 48px;
}
.start svg {
  width: 17px;
  height: 17px;
}
.search {
  display: flex;
  align-items: center;
  width: 287px;
  padding: 0 9px 0 10px;
  border: 1px solid #c9c9c9;
  background: #f3f3f3;
}
.lens {
  width: 18px;
  height: 18px;
}
.search input {
  flex: 1;
  min-width: 0;
  margin-left: 11px;
  font-size: 14px;
  line-height: 20px;
}
.search input::placeholder {
  color: #3a3a3a;
  opacity: 1;
}
.spark {
  width: 62px;
  height: 26px;
}
.apps {
  display: flex;
  gap: 3px;
  padding-left: 4px;
}
.app {
  display: grid;
  place-items: center;
  width: 46px;
  border: solid transparent;
  border-width: 0 3px;
}
.app svg {
  width: 24px;
  height: 24px;
}
.app.open {
  background: linear-gradient(#7ab5e8, #7ab5e8) bottom / 100% 2px no-repeat padding-box;
}
.app.stacked {
  background: linear-gradient(90deg, #7ab5e8 80%, #4f7da5 80%) bottom / 100% 2px no-repeat padding-box;
}
.app.active {
  border: 0;
  background: linear-gradient(90deg, #7ab5e8 90%, #4f7da5 90%) bottom / 100% 2px no-repeat #474849;
}
.tray {
  display: flex;
  align-items: center;
  margin-left: auto;
}
.weather {
  display: flex;
  align-items: center;
  gap: 10px;
  margin-right: 25px;
  font-size: 13px;
  line-height: 18px;
}
.weather svg {
  width: 20px;
  height: 24px;
}
.up svg {
  width: 12px;
  height: 8px;
}
.vol {
  margin: 0 9px 0 8px;
}
.vol svg {
  width: 18px;
  height: 14px;
}
.wifi svg {
  width: 14px;
  height: 14px;
}
.clock {
  display: flex;
  flex-direction: column;
  align-items: center;
  width: 59px;
  margin: 0 16px 0 10px;
  font-size: 11px;
  line-height: 18px;
}
.notif svg {
  width: 26px;
  height: 26px;
}
.desk {
  width: 5px;
  height: 40px;
  margin-left: 12px;
  border-left: 1px solid #5a5a5a;
}
</style>
